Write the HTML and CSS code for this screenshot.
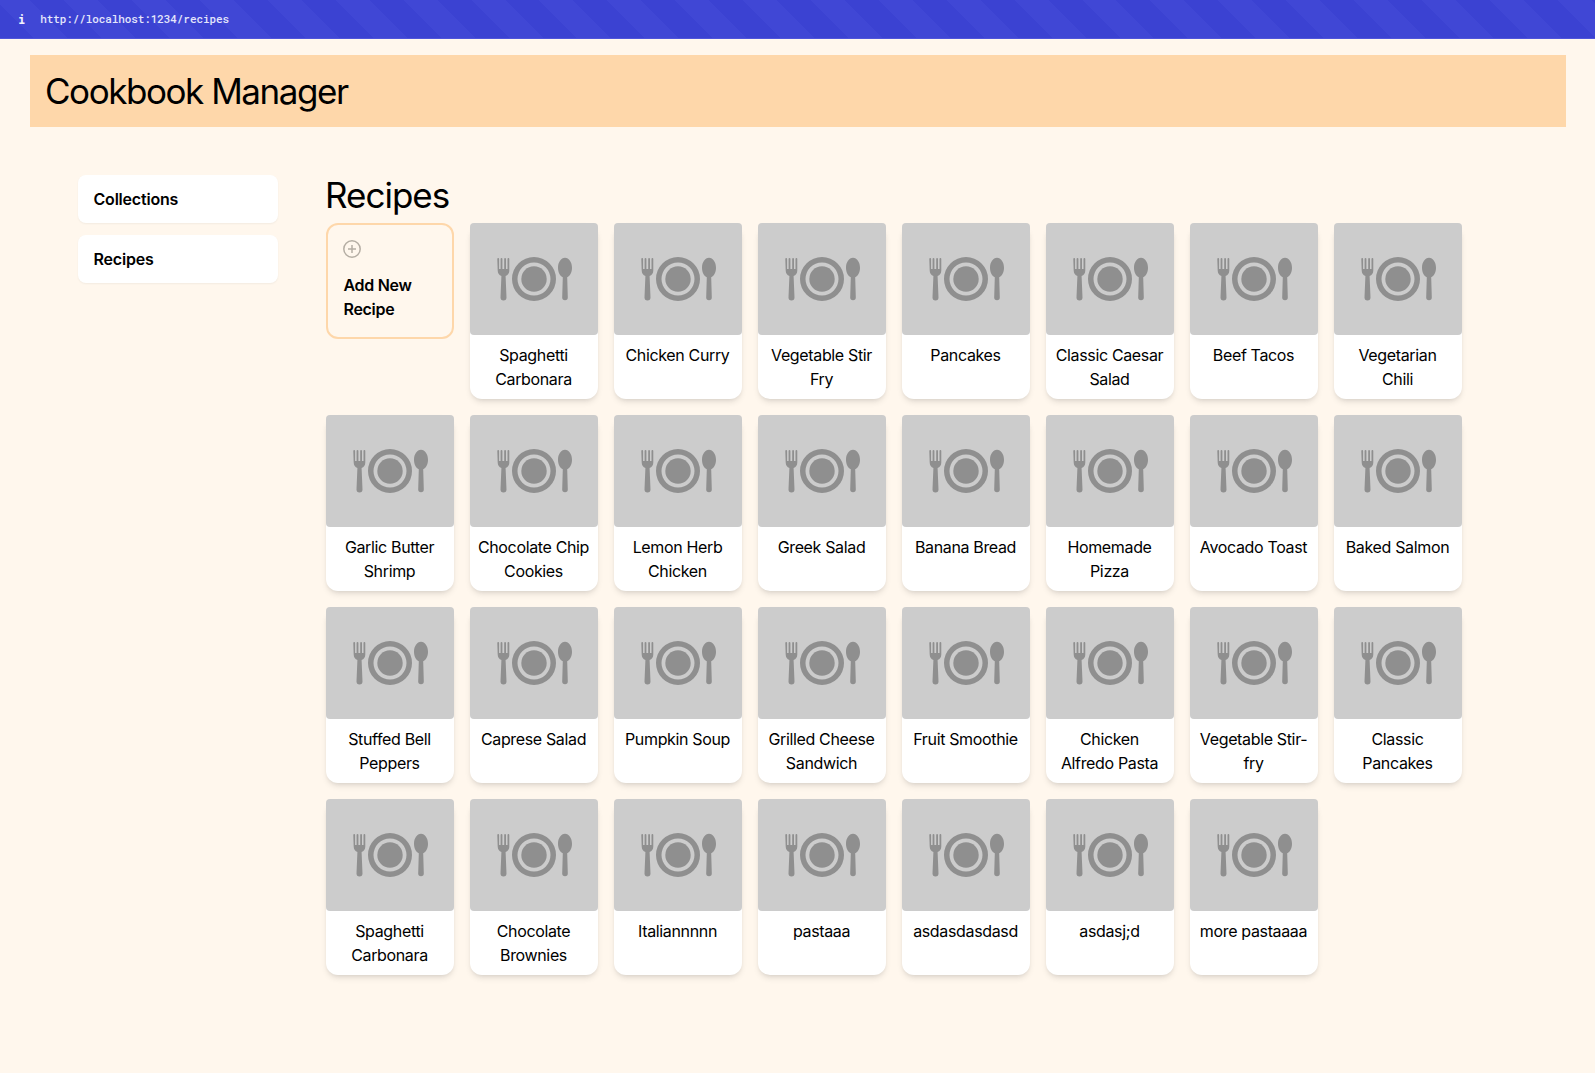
FILE: index.html
```html
<!DOCTYPE html>
<html lang="en">
<head>
<meta charset="utf-8">
<title>Cookbook Manager</title>
<link rel="stylesheet" href="styles.css">
</head>
<body>
<svg class="defs" width="0" height="0" aria-hidden="true">
  <symbol id="meal" viewBox="0 0 128 112">
    <path d="M27.300 36a.8.8 0 0 1 1.800 0v10h1.500V36a.8.8 0 0 1 1.800 0v10h1.800V36a.8.8 0 0 1 1.800 0v10h1.500V36a.8.8 0 0 1 1.800 0v11.500c0 2.800-1.500 4.600-3.700 5.500l.9 21.500a3 3 0 0 1-6 0l.9-21.500c-2.200-.9-3.700-2.700-3.700-5.500z"/>
    <path fill-rule="evenodd" d="M64 34a22 22 0 1 0 0 44a22 22 0 0 0 0-44zm0 5.500a16.500 16.500 0 1 1 0 33a16.500 16.500 0 0 1 0-33z"/>
    <circle cx="64" cy="56" r="12.700"/>
    <path d="M95 34.700c3.900 0 7 4.500 7 10 0 5-2.400 8.500-4.800 9.600l.6 20.200a2.800 2.800 0 0 1-5.600 0l.6-20.200c-2.400-1.100-4.800-4.600-4.800-9.600 0-5.500 3.100-10 7-10z"/>
  </symbol>
</svg>
<header class="url-bar">
  <span class="url-info">i</span>
  <span class="url-text">http://localhost:1234/recipes</span>
</header>
<div class="page">
  <div class="banner"><h1 class="banner-title">Cookbook Manager</h1></div>
  <div class="layout">
    <nav class="sidebar">
      <a class="nav-item">Collections</a>
      <a class="nav-item">Recipes</a>
    </nav>
    <main class="content">
      <h2 class="content-title">Recipes</h2>
      <div class="grid">
        <div class="add-card">
          <div class="add-icon">
            <svg class="plus" viewBox="0 0 18 18"><circle cx="9" cy="9" r="8.200"/><path d="M9 5v8M5 9h8"/></svg>
          </div>
          <div class="add-label">Add New Recipe</div>
        </div>
        <div class="card"><div class="thumb"><svg class="meal"><use href="#meal"/></svg></div><div class="name">Spaghetti Carbonara</div></div>
        <div class="card"><div class="thumb"><svg class="meal"><use href="#meal"/></svg></div><div class="name">Chicken Curry</div></div>
        <div class="card"><div class="thumb"><svg class="meal"><use href="#meal"/></svg></div><div class="name">Vegetable Stir Fry</div></div>
        <div class="card"><div class="thumb"><svg class="meal"><use href="#meal"/></svg></div><div class="name">Pancakes</div></div>
        <div class="card"><div class="thumb"><svg class="meal"><use href="#meal"/></svg></div><div class="name">Classic Caesar Salad</div></div>
        <div class="card"><div class="thumb"><svg class="meal"><use href="#meal"/></svg></div><div class="name">Beef Tacos</div></div>
        <div class="card"><div class="thumb"><svg class="meal"><use href="#meal"/></svg></div><div class="name">Vegetarian Chili</div></div>
        <div class="card"><div class="thumb"><svg class="meal"><use href="#meal"/></svg></div><div class="name">Garlic Butter Shrimp</div></div>
        <div class="card"><div class="thumb"><svg class="meal"><use href="#meal"/></svg></div><div class="name">Chocolate Chip Cookies</div></div>
        <div class="card"><div class="thumb"><svg class="meal"><use href="#meal"/></svg></div><div class="name">Lemon Herb Chicken</div></div>
        <div class="card"><div class="thumb"><svg class="meal"><use href="#meal"/></svg></div><div class="name">Greek Salad</div></div>
        <div class="card"><div class="thumb"><svg class="meal"><use href="#meal"/></svg></div><div class="name">Banana Bread</div></div>
        <div class="card"><div class="thumb"><svg class="meal"><use href="#meal"/></svg></div><div class="name">Homemade Pizza</div></div>
        <div class="card"><div class="thumb"><svg class="meal"><use href="#meal"/></svg></div><div class="name">Avocado Toast</div></div>
        <div class="card"><div class="thumb"><svg class="meal"><use href="#meal"/></svg></div><div class="name">Baked Salmon</div></div>
        <div class="card"><div class="thumb"><svg class="meal"><use href="#meal"/></svg></div><div class="name">Stuffed Bell Peppers</div></div>
        <div class="card"><div class="thumb"><svg class="meal"><use href="#meal"/></svg></div><div class="name">Caprese Salad</div></div>
        <div class="card"><div class="thumb"><svg class="meal"><use href="#meal"/></svg></div><div class="name">Pumpkin Soup</div></div>
        <div class="card"><div class="thumb"><svg class="meal"><use href="#meal"/></svg></div><div class="name">Grilled Cheese Sandwich</div></div>
        <div class="card"><div class="thumb"><svg class="meal"><use href="#meal"/></svg></div><div class="name">Fruit Smoothie</div></div>
        <div class="card"><div class="thumb"><svg class="meal"><use href="#meal"/></svg></div><div class="name">Chicken Alfredo Pasta</div></div>
        <div class="card"><div class="thumb"><svg class="meal"><use href="#meal"/></svg></div><div class="name">Vegetable Stir-fry</div></div>
        <div class="card"><div class="thumb"><svg class="meal"><use href="#meal"/></svg></div><div class="name">Classic Pancakes</div></div>
        <div class="card"><div class="thumb"><svg class="meal"><use href="#meal"/></svg></div><div class="name">Spaghetti Carbonara</div></div>
        <div class="card"><div class="thumb"><svg class="meal"><use href="#meal"/></svg></div><div class="name">Chocolate Brownies</div></div>
        <div class="card"><div class="thumb"><svg class="meal"><use href="#meal"/></svg></div><div class="name">Italiannnnn</div></div>
        <div class="card"><div class="thumb"><svg class="meal"><use href="#meal"/></svg></div><div class="name">pastaaa</div></div>
        <div class="card"><div class="thumb"><svg class="meal"><use href="#meal"/></svg></div><div class="name">asdasdasdasd</div></div>
        <div class="card"><div class="thumb"><svg class="meal"><use href="#meal"/></svg></div><div class="name">asdasj;d</div></div>
        <div class="card"><div class="thumb"><svg class="meal"><use href="#meal"/></svg></div><div class="name">more pastaaaa</div></div>
      </div>
    </main>
  </div>
</div>
</body>
</html>
```
FILE: styles.css
```css
* { box-sizing: border-box; }
html, body { margin: 0; padding: 0; }
body {
  min-height: 1073px;
  background: #fff7ed;
  color: #000;
  font-family: Inter, "Liberation Sans", sans-serif;
  font-size: 16px;
  line-height: 24px;
  letter-spacing: -0.35px;
}
.defs { display: block; height: 0; }
.url-bar {
  height: 39px;
  display: flex;
  align-items: center;
  padding-left: 18px;
  gap: 15px;
  color: #e4e6fb;
  font-family: "Roboto Mono", "Liberation Mono", monospace;
  font-size: 11px;
  font-weight: 500;
  letter-spacing: -0.09px;
  background: repeating-linear-gradient(45deg, #3b42d2 0, #3b42d2 24px, #4047d5 24px, #4047d5 48px);
  border-bottom: 1px solid #4f55d9;
}
.url-info { font-weight: 700; font-size: 12px; color: #f2f3fe; }
.page { padding: 16px 29px 0 30px; }
.banner {
  height: 72px;
  padding: 0 15px;
  display: flex;
  align-items: center;
  background: #fed7aa;
}
.banner-title { margin: 0; font-size: 35px; line-height: 40px; font-weight: 400; letter-spacing: -1.45px; }
.layout {
  display: flex;
  gap: 48px;
  padding: 48px 48px 0;
}
.sidebar {
  width: 200px;
  flex: none;
  display: flex;
  flex-direction: column;
  gap: 12px;
}
.nav-item {
  height: 48px;
  padding: 12px 15.500px;
  background: #fff;
  border-radius: 8px;
  font-weight: 600;
  letter-spacing: -0.2px;
  box-shadow: 0 1px 2px rgba(0,0,0,.05);
}
.content { flex: 1; min-width: 0; }
.content-title { margin: 0 0 8px -1px; font-size: 35px; line-height: 40px; font-weight: 400; letter-spacing: -1px; }
.grid {
  display: grid;
  grid-template-columns: repeat(8, 128px);
  gap: 16px;
  align-items: start;
}
.add-card {
  height: 116px;
  padding: 16px 16px 16px 15.500px;
  border: 2px solid #fed7aa;
  border-radius: 12px;
  font-weight: 600;
  letter-spacing: -0.3px;
}
.add-icon { height: 33px; }
.plus {
  display: block;
  width: 18px;
  height: 18px;
  margin: -1px 0 0 -.5px;
  fill: none;
  stroke: #b5aea4;
  stroke-width: 1.500;
}
.card {
  height: 176px;
  background: #fff;
  border-radius: 12px;
  box-shadow: 0 4px 6px -1px rgba(0,0,0,.1), 0 2px 4px -2px rgba(0,0,0,.1);
}
.thumb { height: 112px; background: #ccc; border-radius: 4px; }
.meal { display: block; width: 128px; height: 112px; fill: #8f8f8f; }
.name { padding: 8px 8.500px 8px 7.500px; text-align: center; }
```
